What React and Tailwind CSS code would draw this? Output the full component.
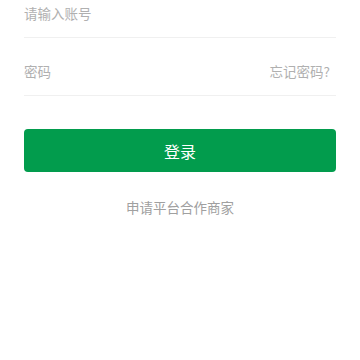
export default function App() {
  const font = { fontFamily: '"Noto Sans CJK SC", "Noto Sans", sans-serif' };
  return (
    <div className="w-[360px] h-[360px] bg-white overflow-hidden" style={font}>
      <div className="px-6">
        <div className="flex items-center pt-[3px] pb-[14px] border-b border-[#f0f0f0]">
          <input
            className="flex-1 text-[13.5px] leading-5 outline-none text-[#333] placeholder:text-[#b0b0b0]"
            placeholder="请输入账号"
          />
        </div>
        <div className="flex items-center pt-[23px] pb-[14px] border-b border-[#f0f0f0]">
          <input
            type="password"
            className="flex-1 text-[13.5px] leading-5 outline-none text-[#333] placeholder:text-[#b0b0b0]"
            placeholder="密码"
          />
          <span className="pr-[6px] text-[13.5px] leading-5 text-[#b0b0b0]">忘记密码?</span>
        </div>
        <button className="mt-[33px] w-full h-[43px] rounded-[4px] bg-[#029c4d] text-white text-[16px]">
          登录
        </button>
        <div className="mt-[25px] text-center text-[13.5px] leading-5 text-[#a0a0a0]">
          申请平台合作商家
        </div>
      </div>
    </div>
  );
}
